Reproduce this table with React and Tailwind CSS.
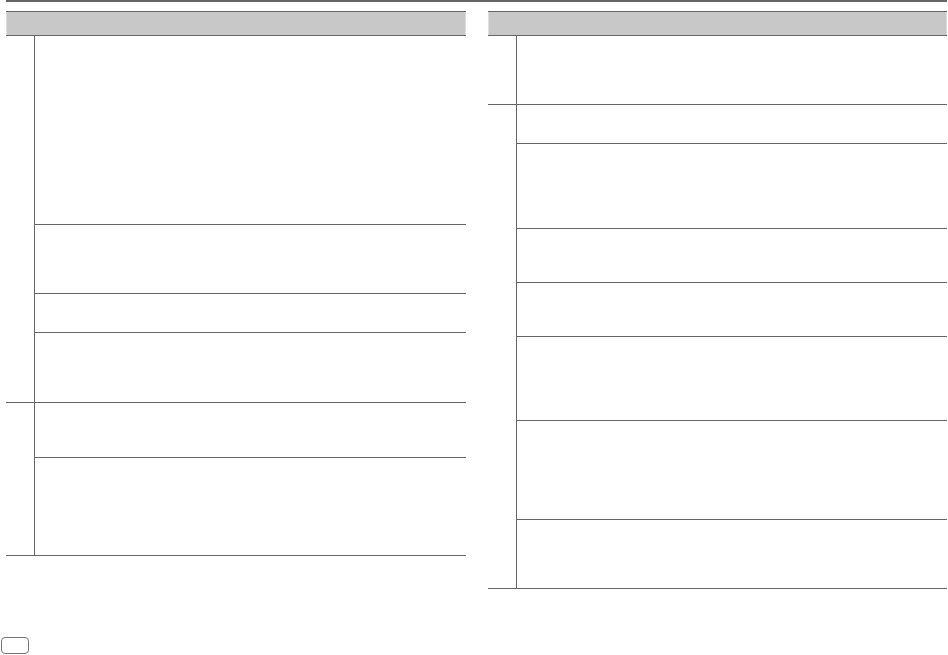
export default function App() {
  const Row = ({ h, border = true }) => (
    <div className={border ? "border-b border-[#666]" : ""} style={{ height: h }} />
  );
  const Group = ({ rows }) => (
    <div className="flex border-b border-[#666]">
      <div className="w-[29px] shrink-0 border-r border-[#666]" />
      <div className="flex flex-1 flex-col">
        {rows.map((h, i) => (
          <Row key={i} h={h} border={i < rows.length - 1} />
        ))}
      </div>
    </div>
  );
  const Header = () => (
    <div className="h-[25px] border-y border-[#666] bg-[#c8c8c8]">
      <div className="h-full border-x border-[#dedede]" />
    </div>
  );
  return (
    <div className="flex h-[655px] w-[948px] flex-col bg-white font-['Liberation_Sans',sans-serif]">
      <div className="ml-[6px] h-[2px] w-[941px] bg-[#666]" />
      <div className="mt-[9px] flex gap-[22px] pl-[6px]">
        <div className="w-[460px]">
          <Header />
          <Group rows={[189, 69, 39, 69]} />
          <Group rows={[55, 97]} />
        </div>
        <div className="w-[459px]">
          <Header />
          <Group rows={[68]} />
          <Group rows={[39, 85, 54, 54, 84, 99, 68]} />
        </div>
      </div>
      <div className="mt-auto mb-[1px] ml-[1px] h-[17px] w-[28px] rounded-[4px] border-[1.5px] border-[#777]" />
    </div>
  );
}
